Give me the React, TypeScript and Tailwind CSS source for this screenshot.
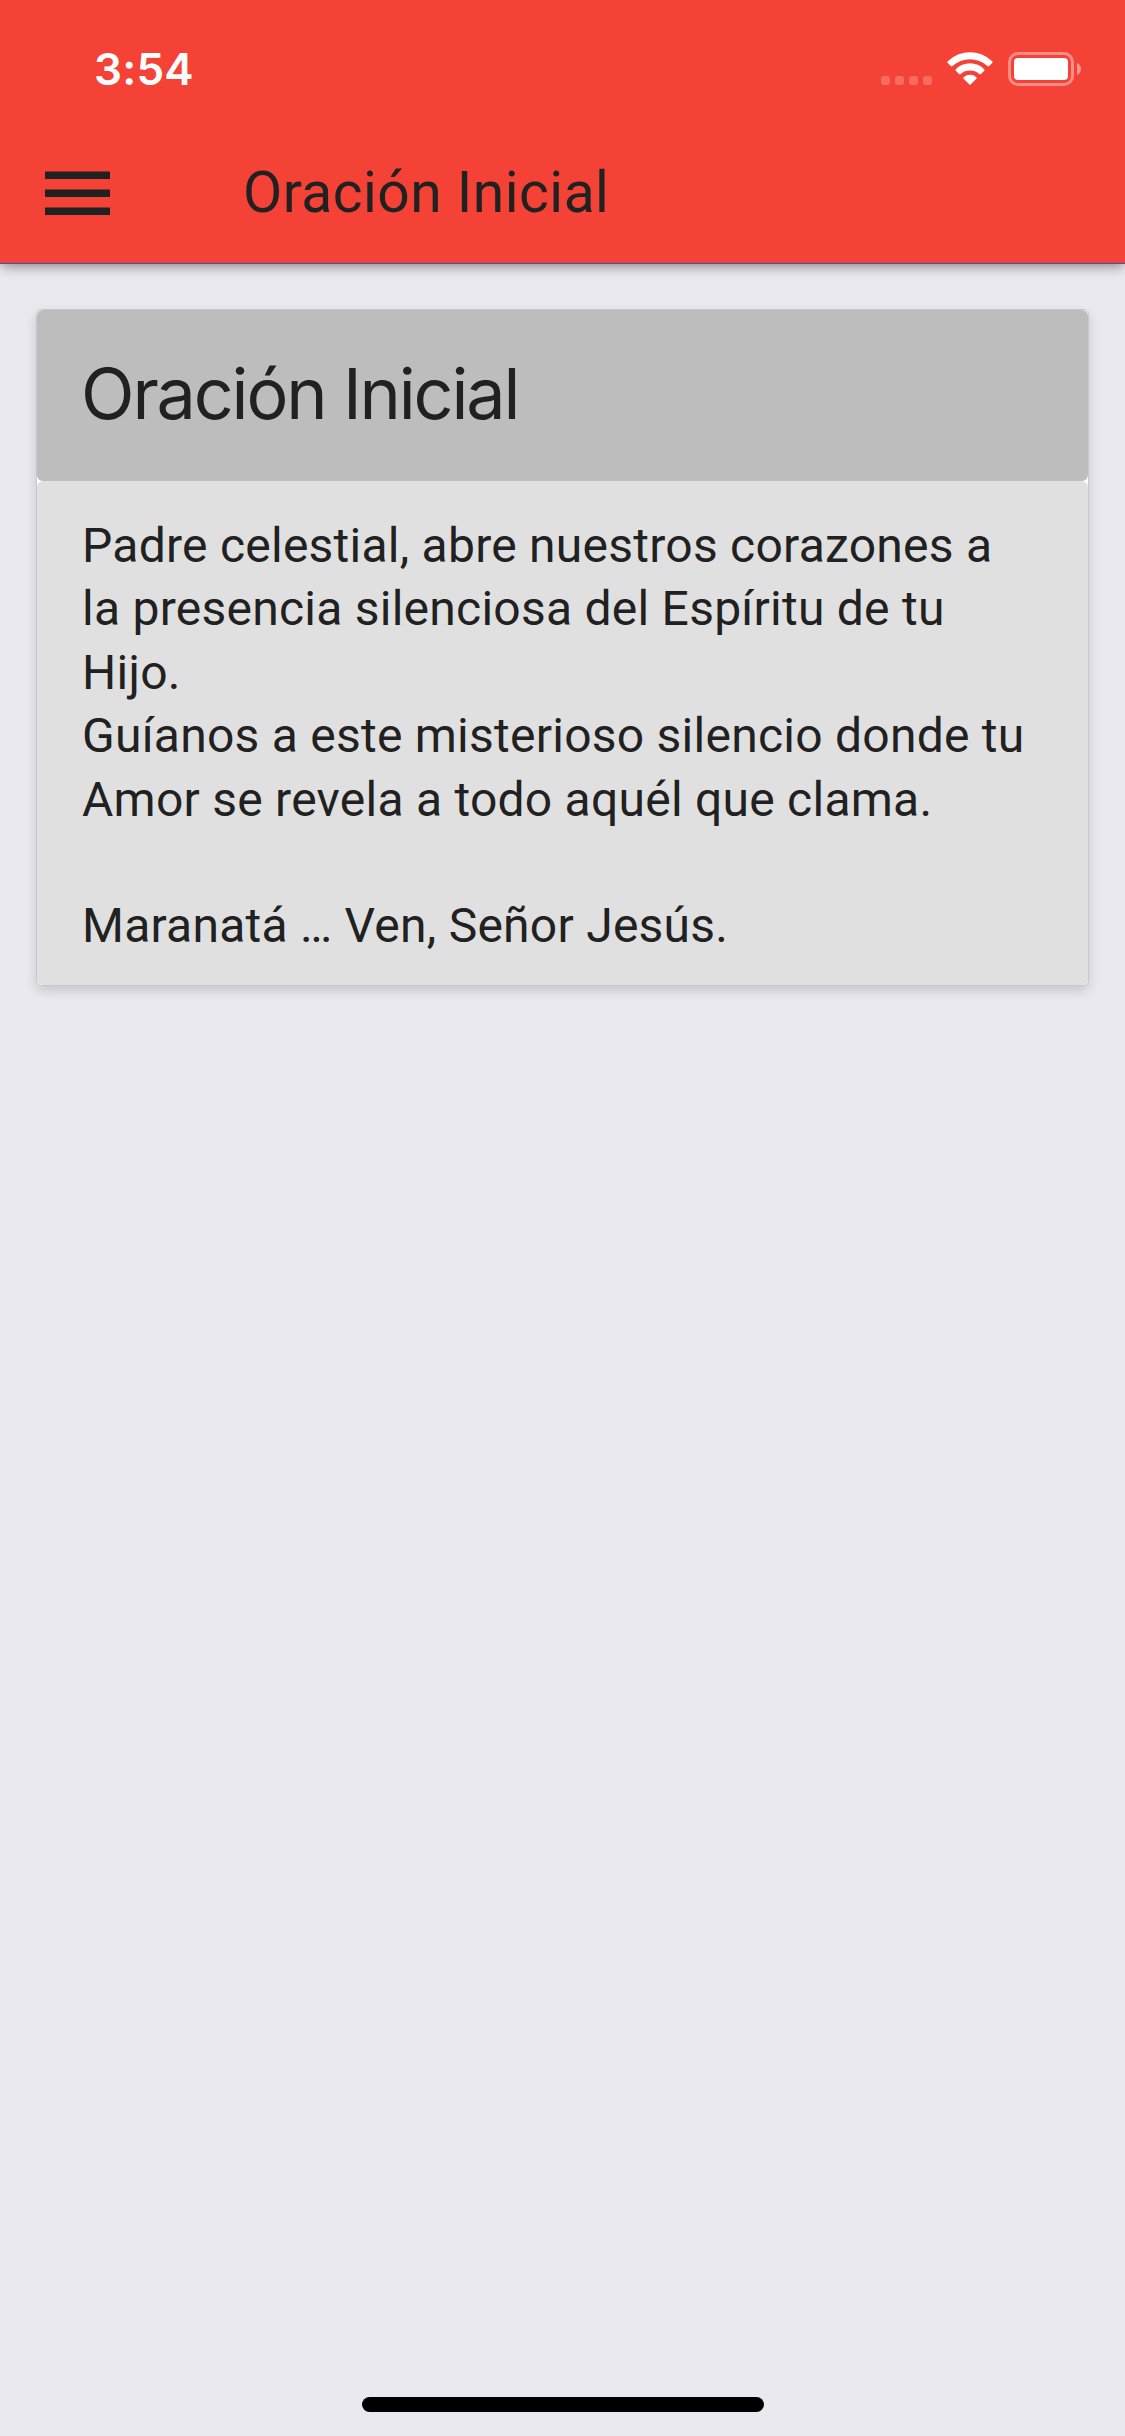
const prayer = `Padre celestial, abre nuestros corazones a
la presencia silenciosa del Espíritu de tu
Hijo.
Guíanos a este misterioso silencio donde tu
Amor se revela a todo aquél que clama.

Maranatá … Ven, Señor Jesús.`

function StatusIcons() {
  return (
    <svg width="200" height="34" viewBox="0 0 200 34" fill="white">
      <g opacity="0.22">
        <rect x="0" y="24" width="9" height="9" rx="3" />
        <rect x="14" y="24" width="9" height="9" rx="3" />
        <rect x="28" y="24" width="9" height="9" rx="3" />
        <rect x="42" y="24" width="9" height="9" rx="3" />
      </g>
      <path d="M66.8 9.3A31.5 31.5 0 0 1 111.2 9.3Q112 10.2 111.2 11L108.1 14.1Q107.3 14.8 106.5 14.1A25.5 25.5 0 0 0 71.5 14.1Q70.7 14.8 69.9 14.1L66.8 11Q66 10.2 66.8 9.3Z" />
      <path d="M74.8 17.2A20 20 0 0 1 103.2 17.2Q104 18 103.2 18.8L100 22Q99.2 22.7 98.4 22A14.5 14.5 0 0 0 79.6 22Q78.8 22.7 78 22L74.8 18.8Q74 18 74.8 17.2Z" />
      <path d="M82.6 25.2A9.5 9.5 0 0 1 95.4 25.2Q96.2 25.9 95.4 26.7L89 33L82.6 26.7Q81.8 25.9 82.6 25.2Z" />
      <rect
        x="128.5"
        y="1.5"
        width="63"
        height="31"
        rx="8.5"
        fill="none"
        stroke="white"
        strokeWidth="3"
        opacity="0.4"
      />
      <rect x="133" y="6" width="54" height="22" rx="4" />
      <path d="M196 11C198.5 12 200 14.5 200 17S198.5 22 196 23Z" opacity="0.45" />
    </svg>
  )
}

export default function App() {
  return (
    <div className="flex h-[2436px] w-[1125px] flex-col overflow-hidden bg-[#e9e9ef] font-['Roboto',sans-serif] text-[#212121]">
      <header className="h-[264px] border-b border-[#3f51b5] bg-[#f44336] shadow-[0_3px_12px_-1px_rgba(0,0,0,0.45)]">
        <div className="flex h-[132px] items-start justify-between pl-[94px] pr-[44px] text-white">
          <span className="mt-[47px] font-['Inter',sans-serif] text-[44px] leading-[44px] font-semibold tracking-[0.2px]">
            3:54
          </span>
          <div className="mt-[52px]">
            <StatusIcons />
          </div>
        </div>
        <div className="flex h-[122px] items-center pl-[45px]">
          <button aria-label="Menú">
            <svg width="65" height="44" viewBox="0 0 65 44" fill="#212121">
              <path d="M0 0.5h65v7.5H0zM0 18.5h65v7.5H0zM0 36.5h65v7.5H0z" />
            </svg>
          </button>
          <h1 className="ml-[133px] text-[57px] leading-[60px] tracking-[0.45px]">Oración Inicial</h1>
        </div>
      </header>

      <main className="flex-1 px-[36px] pt-[45px]">
        <section className="h-[677px] rounded-[6px] border border-[#c8c8cb] bg-white shadow-[0_5px_12px_rgba(0,0,0,0.15)]">
          <h2 className="flex h-[171px] items-center rounded-[6px] bg-[#bdbdbd] pb-[4px] pl-[44px] font-['Inter',sans-serif] text-[70px] tracking-[-2.15px]">
            Oración Inicial
          </h2>
          <p className="h-[504px] rounded-[6px] bg-[#e0e0e0] pt-[33px] pl-[45px] text-[48px] leading-[63.4px] tracking-[0.25px] whitespace-pre-line">
            {prayer}
          </p>
        </section>
      </main>

      <div className="mb-[24px] ml-[362px] h-[15px] w-[402px] rounded-full bg-black" />
    </div>
  )
}
